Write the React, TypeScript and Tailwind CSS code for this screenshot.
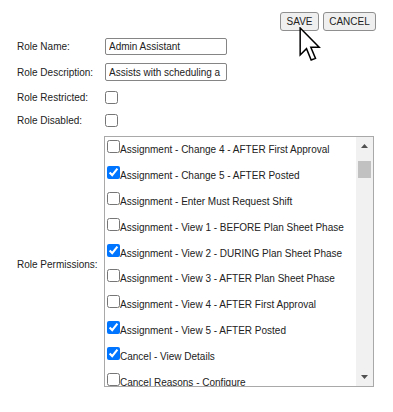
import React from "react";

const permissions = [
  { name: "Assignment - Change 4 - AFTER First Approval", on: false },
  { name: "Assignment - Change 5 - AFTER Posted", on: true },
  { name: "Assignment - Enter Must Request Shift", on: false },
  { name: "Assignment - View 1 - BEFORE Plan Sheet Phase", on: false },
  { name: "Assignment - View 2 - DURING Plan Sheet Phase", on: true },
  { name: "Assignment - View 3 - AFTER Plan Sheet Phase", on: false },
  { name: "Assignment - View 4 - AFTER First Approval", on: false },
  { name: "Assignment - View 5 - AFTER Posted", on: true },
  { name: "Cancel - View Details", on: true },
  { name: "Cancel Reasons - Configure", on: false },
];

const App = () => {
  return (
    <div className="relative w-full h-[412px] overflow-hidden bg-white text-[10px] text-[#222] font-['Liberation_Sans',Arial,sans-serif]">
      {/* buttons */}
      <div className="flex justify-end gap-[4px] pt-[12px] pr-[17px]">
        <button className="w-[39px] h-[19px] border border-[#8f8f8f] rounded-[3px] bg-[#efefef] text-[10px] text-[#222]">
          SAVE
        </button>
        <button className="w-[53px] h-[19px] border border-[#8f8f8f] rounded-[3px] bg-[#efefef] text-[10px] text-[#222]">
          CANCEL
        </button>
      </div>

      {/* form */}
      <div className="grid grid-cols-[87px_1fr] items-center pl-[17px] mt-[7px]">
        <label className="h-[17px] flex items-center">Role Name:</label>
        <div>
          <input
            type="text"
            defaultValue="Admin Assistant"
            className="ml-[1px] w-[122px] h-[17px] border border-[#858585] rounded-[2px] px-[3px] text-[10px] text-[#222] outline-none"
          />
        </div>

        <label className="h-[18px] mt-[8px] flex items-center">Role Description:</label>
        <div className="mt-[8px]">
          <input
            type="text"
            defaultValue="Assists with scheduling a"
            className="ml-[1px] w-[122px] h-[18px] border border-[#858585] rounded-[2px] px-[3px] text-[10px] text-[#222] outline-none"
          />
        </div>

        <label className="h-[16px] mt-[8px] flex items-center">Role Restricted:</label>
        <div className="h-[16px] mt-[8px] flex items-center">
          <input type="checkbox" className="ml-[1px] w-[13px] h-[13px]" />
        </div>

        <label className="h-[16px] mt-[7px] flex items-center">Role Disabled:</label>
        <div className="h-[16px] mt-[7px] flex items-center">
          <input type="checkbox" className="ml-[1px] w-[13px] h-[13px]" />
        </div>

        <label className="mt-[8px] pt-[6px] self-center">Role Permissions:</label>
        <div className="mt-[8px]">
          <div className="flex w-[270px] h-[251px] border border-[#a9a9a9] overflow-hidden">
            <div className="flex-1 overflow-hidden pl-[2px]">
              <div className="-mt-[1px]">
                {permissions.map((p) => (
                  <div key={p.name} className="h-[25.8px] flex items-center whitespace-nowrap">
                    <label>
                      <input type="checkbox" defaultChecked={p.on} className="w-[13px] h-[13px]" />
                      {p.name}
                    </label>
                  </div>
                ))}
              </div>
            </div>
            {/* scrollbar */}
            <div className="w-[17px] bg-[#f1f1f1] flex flex-col items-center">
              <svg width="7" height="4" viewBox="0 0 7 4" className="mt-[7px]">
                <path d="M0 4 L3.5 0 L7 4 Z" fill="#505050" />
              </svg>
              <div className="w-[13px] h-[17px] mt-[13px] bg-[#c1c1c1]" />
              <div className="flex-1" />
              <svg width="7" height="4" viewBox="0 0 7 4" className="mb-[7px]">
                <path d="M0 0 L7 0 L3.5 4 Z" fill="#505050" />
              </svg>
            </div>
          </div>
        </div>
      </div>

      {/* mouse pointer */}
      <svg
        width="22"
        height="35"
        viewBox="0 0 13 21"
        className="absolute left-[299px] top-[27px]"
      >
        <path
          d="M0.6 0.6 L0.6 16.8 L4.4 13 L7.2 19.8 L9.8 18.8 L7 12.2 L12 12.2 Z"
          fill="#fff"
          stroke="#000"
          strokeWidth="0.9"
          strokeLinejoin="miter"
        />
      </svg>
    </div>
  );
};

export default App;
